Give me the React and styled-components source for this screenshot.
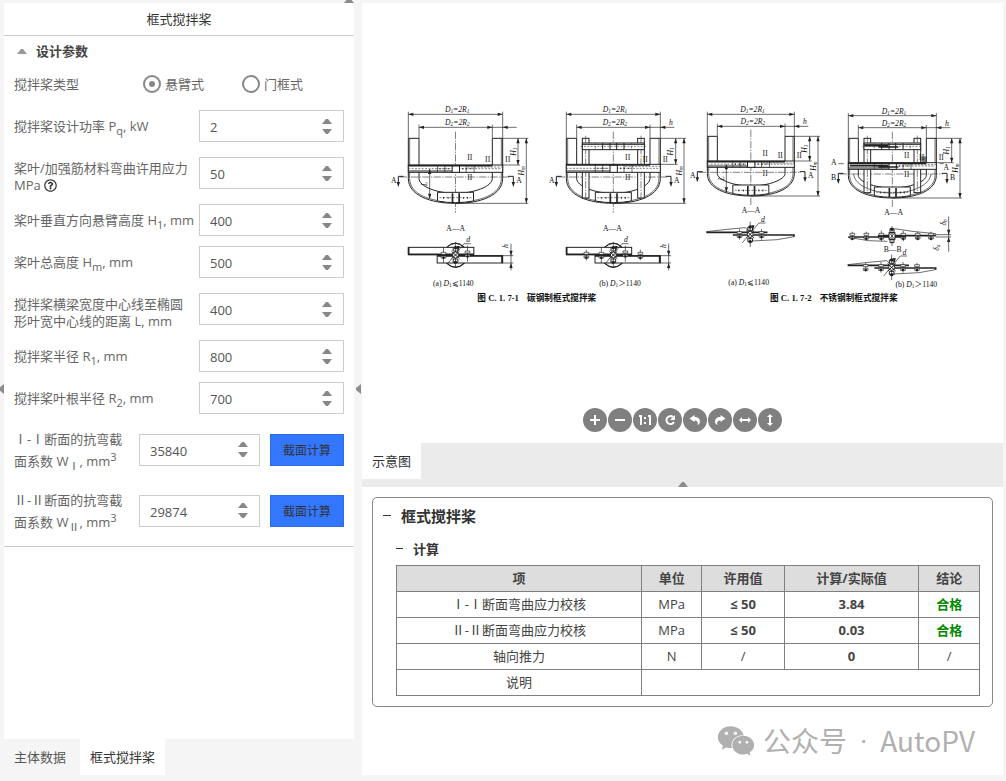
import React, { useState } from "react";
import styled, { createGlobalStyle } from "styled-components";
import { FaRegQuestionCircle, FaWeixin } from "react-icons/fa";

const GlobalStyle = createGlobalStyle`
  * {
    box-sizing: border-box;
  }
  body {
    margin: 0;
    background: #f5f5f5;
    color: #444;
    font-family: "Open Sans", "Noto Sans CJK SC", sans-serif;
    font-size: 13px;
  }
  button, input {
    font-family: inherit;
  }
`;

const Page = styled.div`
  display: grid;
  grid-template-columns: 4px 350px 8px minmax(0, 1fr);
  grid-template-rows: 3px 1fr;
  min-height: 100vh;
  padding: 0 3px 6px 0;
`;

const TopGutter = styled.div`
  grid-column: 1 / 3;
  display: flex;
  justify-content: flex-end;
  align-items: flex-end;
  overflow: hidden;
`;

const Gutter = styled.div`
  grid-row: 2;
  grid-column: ${(props) => props.$column};
  display: flex;
  align-items: center;
  justify-content: flex-end;
  padding-right: ${(props) => props.$inset || 0}px;
  overflow: hidden;
`;

const Handle = styled.button`
  flex: none;
  padding: 0;
  border: 0;
  background: none;
  color: #8c8c8c;
  cursor: pointer;

  svg {
    display: block;
    fill: currentColor;
  }
`;

const Column = styled.div`
  grid-row: 2;
  grid-column: ${(props) => props.$column};
  display: flex;
  flex-direction: column;
  min-width: 0;
`;

const Panel = styled.section`
  flex: 1;
  background: #fff;
`;

const PanelTitle = styled.h1`
  margin: 0;
  border-bottom: 1px solid #ccc;
  color: #333;
  font-size: 13px;
  font-weight: 400;
  line-height: 32px;
  text-align: center;
`;

const Group = styled.div`
  padding: 2px 10px 5px;
  border-bottom: 1px solid #ccc;
`;

const GroupHeader = styled.button`
  display: flex;
  align-items: center;
  gap: 9px;
  height: 25px;
  padding: 0 3px;
  border: 0;
  background: none;
  color: #444;
  font-size: 13px;
  font-weight: 700;

  svg {
    fill: #999;
  }
`;

const Row = styled.div`
  display: flex;
  align-items: center;
  min-height: ${(props) => (props.$tall ? 61 : 42)}px;
`;

const labelPadding = (props) => {
  if (props.$tall) return "8px 0";
  return props.$wrapped ? "13px 0 5px" : "9px 0";
};

const Label = styled.label`
  flex: ${(props) => (props.$width ? `0 0 ${props.$width}px` : "1")};
  padding: ${labelPadding};
  color: #666;
  line-height: ${(props) => (props.$tall ? 22 : 17)}px;

  sub, sup {
    font-size: 11px;
    line-height: 0;
  }
  svg {
    color: #333;
    vertical-align: -2px;
  }
`;

const RadioSet = styled.div`
  display: flex;
  flex: 1;
`;

const RadioLabel = styled.label`
  display: flex;
  align-items: center;
  gap: 4px;
  width: 99px;
  color: #666;
  line-height: 17px;
`;

const Radio = styled.input`
  appearance: none;
  display: grid;
  place-items: center;
  width: 18px;
  height: 18px;
  margin: 0;
  border: 2px solid #888;
  border-radius: 50%;

  &:checked::before {
    content: "";
    width: 6px;
    height: 6px;
    border-radius: 50%;
    background: #888;
  }
`;

const NumberBox = styled.div`
  display: flex;
  flex: none;
  width: ${(props) => props.$width}px;
  height: 32px;
  border: 1px solid #ccc;
  background: #fff;
`;

const NumberInput = styled.input`
  flex: 1;
  width: 0;
  min-width: 0;
  padding: 2px 0 0 10px;
  border: 0;
  outline: none;
  background: none;
  color: #555;
  font-size: 13px;
  appearance: textfield;

  &::-webkit-inner-spin-button {
    appearance: none;
    margin: 0;
  }
`;

const Spinner = styled.div`
  display: flex;
  flex-direction: column;
  justify-content: center;
  gap: 5px;
  width: 32px;
`;

const SpinButton = styled.button`
  display: flex;
  justify-content: center;
  padding: 0;
  border: 0;
  background: none;

  svg {
    fill: #888;
  }
`;

const CalcButton = styled.button`
  flex: 1;
  height: 32px;
  margin-left: 10px;
  padding: 0;
  border: 1px solid #2e6be6;
  background: #3377ff;
  color: #333;
  font-size: 12px;
  white-space: nowrap;
`;

const Tabs = styled.nav`
  display: flex;
  align-items: flex-start;
`;

const Tab = styled.button`
  height: 36px;
  padding: 0 ${(props) => (props.$wide ? 14 : 10)}px 2px 10px;
  border: 0;
  background: ${(props) => (props.$active ? "#fff" : "transparent")};
  color: ${(props) => (props.$active ? "#333" : "#555")};
  font-size: 13px;
`;

const Viewer = styled.section`
  display: flex;
  flex: 1;
  flex-direction: column;
  background: #fff;
`;

const Canvas = styled.div`
  display: flex;
  flex: 1;
  align-items: center;
  justify-content: center;
`;

const Drawing = styled.svg`
  width: 100%;
  max-width: 601px;
  fill: none;
  stroke: #222;
  stroke-width: 3;

  text {
    fill: #111;
    stroke: none;
    font-family: "Liberation Serif", "Noto Sans CJK SC", serif;
    font-size: 23px;
    text-anchor: middle;
  }
  .it {
    font-style: italic;
  }
  .sub {
    font-size: 16px;
  }
  .thin {
    stroke-width: 2;
  }
  .heavy {
    stroke-width: 5;
  }
  .solid {
    fill: #222;
    stroke: none;
  }
  .white {
    fill: #fff;
  }
  .axis {
    stroke: #444;
    stroke-width: 2;
    stroke-dasharray: 22 4 4 4;
  }
  .dash {
    stroke: #444;
    stroke-width: 2;
    stroke-dasharray: 6 4;
  }
  .caption {
    font-size: 26px;
    font-weight: 700;
    text-anchor: start;
  }
`;

const Toolbar = styled.div`
  display: flex;
  justify-content: center;
  gap: 1px;
  padding: 7px 0 11px;
`;

const ToolButton = styled.button`
  width: 24px;
  height: 24px;
  padding: 0;
  border: 0;
  border-radius: 50%;
  background: #808080;
  color: #fff;

  svg {
    display: block;
    fill: none;
    stroke: currentColor;
    stroke-width: 2;
  }
`;

const ViewerStrip = styled.div`
  background: #ebebeb;
`;

const StripHandle = styled.div`
  display: flex;
  align-items: flex-end;
  justify-content: center;
  height: 8px;
`;

const Report = styled.section`
  padding: 10px 10px 0;
  background: #fff;
`;

const Card = styled.div`
  padding: 5px 12px 10px 10px;
  border: 1px solid #888;
  border-radius: 5px;
`;

const Fold = styled.button`
  display: flex;
  align-items: center;
  gap: 10px;
  height: ${(props) => (props.$sub ? 34 : 24)}px;
  margin: ${(props) => (props.$sub ? "4px 0 0 13px" : "0")};
  padding: 0;
  border: 0;
  background: none;
  color: #333;
  font-size: ${(props) => (props.$sub ? 13 : 15)}px;
  font-weight: 700;

  &::before {
    content: "";
    width: ${(props) => (props.$sub ? 7 : 8)}px;
    border-top: 1px solid #333;
  }
`;

const Table = styled.table`
  width: calc(100% - 13px);
  margin-left: 13px;
  border-collapse: collapse;
  table-layout: fixed;
  text-align: center;

  th, td {
    height: 26px;
    padding: 0 0 2px;
    border: 1px solid #808080;
    line-height: 18px;
  }
  th {
    background: #ddd;
  }
`;

const Passed = styled.b`
  color: #008800;
`;

const Watermark = styled.footer`
  display: flex;
  align-items: center;
  justify-content: flex-end;
  gap: 8px;
  height: 68px;
  padding-right: 18px;
  color: #b0b0b0;
`;

const WatermarkText = styled.div`
  display: flex;
  gap: 12px;
  padding-bottom: 2px;
  font-family: "Noto Sans CJK SC", sans-serif;
  font-size: 28px;
  line-height: 40px;
`;

const Dot = styled.span`
  font-family: "Liberation Sans", sans-serif;
`;

const Triangle = ({ down }) => (
  <svg width="10" height="6" viewBox="0 0 10 6">
    <path d={down ? "M0 0H10L6 5H4Z" : "M0 6H10L6 1H4Z"} />
  </svg>
);

const ArrowUp = () => (
  <svg width="10" height="5" viewBox="0 0 10 5">
    <path d="M0 5L4 0H6L10 5Z" />
  </svg>
);

const ArrowLeft = () => (
  <svg width="5" height="10" viewBox="0 0 5 10">
    <path d="M5 0L0 4V6L5 10Z" />
  </svg>
);

const NumberField = ({ id, initial, width = 145 }) => {
  const [value, setValue] = useState(initial);

  return (
    <NumberBox $width={width}>
      <NumberInput
        id={id}
        type="number"
        value={value}
        onChange={(e) => setValue(e.target.value)}
      />
      <Spinner>
        <SpinButton
          aria-label="增加"
          onClick={() => setValue(Number(value) + 1)}
        >
          <Triangle />
        </SpinButton>
        <SpinButton
          aria-label="减少"
          onClick={() => setValue(Number(value) - 1)}
        >
          <Triangle down />
        </SpinButton>
      </Spinner>
    </NumberBox>
  );
};

const fields = [
  { id: "power", value: 2, label: <>搅拌桨设计功率 P<sub>q</sub>, kW</> },
  {
    id: "stress",
    value: 50,
    wrapped: true,
    label: (
      <>
        桨叶/加强筋材料弯曲许用应力 MPa <FaRegQuestionCircle size={13} />
      </>
    ),
  },
  { id: "h1", value: 400, label: <>桨叶垂直方向悬臂高度 H<sub>1</sub>, mm</> },
  { id: "hm", value: 500, label: <>桨叶总高度 H<sub>m</sub>, mm</> },
  {
    id: "length",
    value: 400,
    wrapped: true,
    label: <>搅拌桨横梁宽度中心线至椭圆<br />形叶宽中心线的距离 L, mm</>,
  },
  { id: "r1", value: 800, label: <>搅拌桨半径 R<sub>1</sub>, mm</> },
  { id: "r2", value: 700, label: <>搅拌桨叶根半径 R<sub>2</sub>, mm</> },
];

const sections = [
  {
    id: "w1",
    value: 35840,
    label: <>Ⅰ-Ⅰ断面的抗弯截<br />面系数 W<sub>Ⅰ</sub>, mm<sup>3</sup></>,
  },
  {
    id: "w2",
    value: 29874,
    label: <>Ⅱ-Ⅱ断面的抗弯截<br />面系数 W<sub>Ⅱ</sub>, mm<sup>3</sup></>,
  },
];

// Arrow head with its tip at x, y
const Head = ({ x, y, dir }) => {
  const turn = { right: 0, down: 90, left: 180, up: 270 }[dir];
  return (
    <path
      className="solid"
      d="M0 0L-15 -5V5Z"
      transform={`translate(${x} ${y}) rotate(${turn})`}
    />
  );
};

const DimX = ({ x1, x2, y, name }) => (
  <g>
    <path className="thin" d={`M${x1} ${y}H${x2}`} />
    <Head x={x1} y={y} dir="left" />
    <Head x={x2} y={y} dir="right" />
    {name && (
      <text className="it" x={(x1 + x2) / 2 + 5} y={y - 6}>
        D<tspan className="sub" dy="3">{name}</tspan>
        <tspan dy="-3">=2R</tspan>
        <tspan className="sub" dy="3">{name}</tspan>
      </text>
    )}
  </g>
);

const DimY = ({ x, y1, y2, name, sub }) => (
  <g>
    <path className="thin" d={`M${x} ${y1}V${y2}`} />
    <Head x={x} y={y1} dir="up" />
    <Head x={x} y={y2} dir="down" />
    <text
      className="it"
      transform={`translate(${x - 7} ${(y1 + y2) / 2}) rotate(-90)`}
    >
      {name}
      <tspan className="sub" dy="3">{sub}</tspan>
    </text>
  </g>
);

const Mark = ({ x, y, name, right }) => (
  <g>
    <path d={`M${x + (right ? -16 : 16)} ${y}H${x}V${y + 22}`} />
    <Head x={x} y={y + 32} dir="down" />
    <text x={x + (right ? 17 : -14)} y={y + 20}>{name}</text>
  </g>
);

const Paddle = ({ l, r, il, ir, top, cut, bot, d1, d2, beam, beamH, letter = "A", h, stiff }) => {
  const c = (l + r) / 2;
  const low = bot - 30;
  return (
    <g>
      <path className="thin" d={`M${l} ${d1 - 8}V${top}M${r} ${d1 - 8}V${top}M${il} ${d2 - 8}V${top}M${ir} ${d2 - 8}V${top}`} />
      <DimX x1={l} x2={r} y={d1} name="1" />
      <DimX x1={il} x2={ir} y={d2} name="2" />
      <path className="thin" d={`M${ir} ${d2}H${r + 42}`} />
      <Head x={r} y={d2} dir="left" />
      {h && <text className="it" x={r + 32} y={d2 - 6}>h</text>}

      <path className="white" d={`M${l} ${top}V${cut + 4}C${l} ${bot - 24} ${c - 76} ${bot} ${c} ${bot}S${r} ${bot - 24} ${r} ${cut + 4}V${top}H${ir}V${cut + 4}C${ir} ${low - 20} ${c + 54} ${low} ${c} ${low}S${il} ${low - 20} ${il} ${cut + 4}V${top}Z`} />
      <path className="thin" d={`M${l + 4} ${top}V${cut + 4}C${l + 4} ${bot - 26} ${c - 74} ${bot - 4} ${c} ${bot - 4}M${r - 4} ${top}V${cut + 4}C${r - 4} ${bot - 26} ${c + 74} ${bot - 4} ${c} ${bot - 4}`} />
      <path className="axis" d={`M${l - 26} ${cut}H${r + 20}M${c} ${top - 20}V${bot + 28}`} />

      {stiff && (
        <g>
          {[il + 17, ir - 37].map((x) => (
            <g key={x}>
              <rect className="white" x={x} y={top} width="20" height={bot - top - 16} />
              <path className="axis" d={`M${x + 10} ${top - 8}V${bot - 12}`} />
            </g>
          ))}
          <rect className="white" x={il + 17} y={top + 14} width={ir - il - 34} height="20" />
          <path className="dash" d={`M${il + 12} ${top + 24}H${ir - 12}`} />
          <path d={`M${il + 17} ${top + 18}H${ir - 17}M${c - 10} ${top + 14}v20M${c + 10} ${top + 14}v20M${c - 32} ${top + 14}v20M${c + 32} ${top + 14}v20`} />
          <path className="dash" d={`M${c - 54} ${top + 14}v20M${c + 54} ${top + 14}v20`} />
        </g>
      )}

      <rect className="white" x={l} y={beam} width={r - l} height={beamH} />
      <path className="heavy" d={`M${l} ${beam + 2}H${ir}`} />
      <path d={`M${l} ${beam + beamH - 4}H${c - 10}`} />
      <path className="dash" d={`M${l} ${beam + beamH / 2}H${r - 4}M${c + 36} ${beam + 6}H${r}`} />
      <rect className="white" x={c - 10} y={beam + 3} width="22" height={beamH - 3} />
      <path className="thin" d={`M${c - 54} ${beam}v${beamH}M${c + 56} ${beam}v${beamH}M${c - 32} ${beam}v${beamH}M${c + 32} ${beam}v${beamH}`} />
      {[-46, -34, -22, 22, 34, 46].map((x) => (
        <path key={x} d={`M${c + x} ${beam + beamH / 2 - 2}v4`} />
      ))}

      <path className="white" d={`M${c - 54} ${low - 3}H${c + 54}V${bot - 7}Q${c} ${bot + 3} ${c - 54} ${bot - 7}Z`} />
      <path className="heavy" d={`M${c - 9} ${low}V${bot - 3}M${c + 11} ${low}V${bot - 3}`} />
      <path className="dash" d={`M${c - 48} ${bot - 17}H${c + 50}`} />
      {[-36, -22, 24, 36].map((x) => (
        <path key={x} d={`M${c + x} ${bot - 19}v5`} />
      ))}

      <text x={c + 43} y={beam - 14}>II</text>
      <text x={c + 43} y={cut + 10}>II</text>
      <text x={ir - 14} y={beam - 8}>II</text>
      <text x={r + 15} y={beam - 8}>II</text>

      <path className="thin" d={`M${r} ${top}H${r + 77}M${r} ${beam}H${r + 52}M${c} ${bot}H${r + 77}`} />
      <DimY x={r + 46} y1={top} y2={beam} name="H" sub="1" />
      <DimY x={r + 71} y1={top} y2={bot} name="H" sub="m" />
      <Mark x={l - 30} y={cut - 2} name={letter} />
      <Mark x={r + 32} y={cut - 2} name={letter} right />
    </g>
  );
};

const Bolt = ({ x, y, tall = 16 }) => (
  <g>
    <path className="thin" d={`M${x} ${y - tall}V${y + tall}`} />
    <path className="white thin" d={`M${x - 7} ${y - 8}h14v6h-14ZM${x - 7} ${y + 3}h14v6h-14Z`} />
    <circle className="solid" cx={x} cy={y + 8} r="4" />
  </g>
);

const Hub = ({ x, y }) => (
  <g>
    <path className="thin" d={`M${x} ${y - 38}V${y + 38}M${x - 24} ${y + 26}L${x + 26} ${y - 34}H${x + 46}`} />
    <circle className="white" cx={x} cy={y} r="9" />
    <path d={`M${x - 12} ${y - 11}L${x + 12} ${y + 11}M${x + 12} ${y - 11}L${x - 12} ${y + 11}M${x - 7} ${y - 22}h14v10h-14ZM${x - 7} ${y + 12}h14v10h-14Z`} />
    <Head x={x + 8} y={y - 12} dir="down" />
    <circle className="solid" cx={x} cy={y - 22} r="5" />
    <circle className="solid" cx={x} cy={y + 22} r="5" />
    <text className="it" x={x + 38} y={y - 38}>d</text>
  </g>
);

const PlateSection = ({ l, r, extra }) => {
  const c = (l + r) / 2;
  return (
    <g>
      <path className="white" d={`M${c - 27} 457Q${c} 431 ${c + 27} 457V505Q${c} 530 ${c - 27} 505Z`} />
      <rect className="white" x={l} y="457" width={c + 55 - l} height="22" />
      <rect className="white" x={c - 55} y="482" width={r - c + 55} height="22" />
      <path d={`M${c - 26} 457Q${c} 433 ${c + 26} 457M${c - 26} 504Q${c} 529 ${c + 26} 504`} />
      <path className="heavy" d={`M${l} 478H${c + 55}M${c - 55} 483H${r}M${r - 2} 482V504M${l + 1} 457V478`} />
      <Bolt x={c - 36} y={480} tall={24} />
      <Bolt x={c + 36} y={476} tall={24} />
      {extra && <Bolt x={l + 60} y={480} />}
      {extra && <Bolt x={r - 60} y={480} />}
      <Hub x={c} y={480} />
      <path className="thin" d={`M${r} 482H${r + 32}M${r} 504H${r + 32}M${r + 25} 446V526`} />
      <Head x={r + 25} y={482} dir="down" />
      <Head x={r + 25} y={504} dir="up" />
      <text className="it" transform={`translate(${r + 17} 453) rotate(-90)`}>h</text>
    </g>
  );
};

const TaperSection = ({ l, r, y, flip, bolts = [] }) => {
  const c = (l + r) / 2;
  return (
    <g>
      {flip ? (
        <path className="thin" d={`M${l} ${y + 4}L${l + 60} ${y + 14}L${c - 14} ${y + 16}M${c + 8} ${y - 22}L${c + 60} ${y - 14}L${r} ${y - 7}V${y}`} />
      ) : (
        <path className="thin" d={`M${l} ${y - 8}L${c - 60} ${y - 16}L${c - 14} ${y - 20}L${c - 6} ${y - 10}M${c + 6} ${y + 20}L${r - 50} ${y + 16}L${r} ${y + 7}`} />
      )}
      <path className="heavy" d={flip
        ? `M${l} ${y + 3}H${c + 42}M${c - 42} ${y - 1}H${r}`
        : `M${l} ${y - 6}H${c + 52}M${c - 52} ${y + 2}H${r}V${y + 7}`} />
      {bolts.map((x) => (
        <Bolt key={x} x={x} y={y} tall={13} />
      ))}
      <Bolt x={c - 32} y={y} />
      <Bolt x={c + 34} y={y} />
      {!flip && <Hub x={c} y={y} />}
      {flip && (
        <g>
          <path className="white" d={`M${c - 9} ${y - 10}h18v20h-18ZM${c - 6} ${y - 22}h12v12h-12ZM${c - 6} ${y + 10}h12v10h-12Z`} />
          <path className="thin" d={`M${c} ${y - 30}V${y + 30}M${c - 9} ${y - 10}l18 20M${c + 9} ${y - 10}l-18 20`} />
          <circle className="solid" cx={c} cy={y - 20} r="5" />
        </g>
      )}
    </g>
  );
};

const PaddleDrawing = () => (
  <Drawing viewBox="0 0 1803 645" role="img" aria-label="框式搅拌桨示意图">
    <g transform="translate(9 0)">
      <Paddle l={70} r={353} il={102} ir={322} top={130} cut={246} bot={325} d1={58} d2={97} beam={210} beamH={22} />
      <DimY x={134} y1={222} y2={311} name="L" />
      <text x="212" y="409">A—A</text>
      <PlateSection l={70} r={353} />
      <text x="205" y="574">(a) <tspan className="it">D</tspan><tspan className="sub" dy="3">1</tspan><tspan dy="-3">⩽1140</tspan></text>
    </g>
    <g transform="translate(474 0)">
      <Paddle l={79} r={361} il={110} ir={330} top={130} cut={246} bot={325} d1={58} d2={97} beam={208} beamH={24} h stiff />
      <text x="217" y="408">A—A</text>
      <PlateSection l={79} r={361} extra />
      <text x="240" y="574">(b) <tspan className="it">D</tspan><tspan className="sub" dy="3">1</tspan><tspan dy="-3">＞1140</tspan></text>
    </g>
    <g transform="translate(909 0)">
      <Paddle l={67} r={328} il={97} ir={300} top={124} cut={232} bot={303} d1={58} d2={94} beam={198} beamH={19} h />
      <DimY x={124} y1={208} y2={292} name="L" />
      <text x="198" y="355">A—A</text>
      <TaperSection l={64} r={327} y={418} />
      <text x="191" y="570">(a) <tspan className="it">D</tspan><tspan className="sub" dy="3">1</tspan><tspan dy="-3">⩽1140</tspan></text>
    </g>
    <g transform="translate(1329 0)">
      <Paddle l={70} r={334} il={100} ir={304} top={130} cut={237} bot={309} d1={62} d2={98} beam={203} beamH={20} letter="B" h stiff />
      <path className="heavy" d="M75 212H190M118 152H190M160 216h60M160 156h60" />
      <path className="thin" d="M86 237C88 270 140 294 202 294S314 270 318 237M40 206h16M344 206h12" />
      <rect className="solid" x="289" y="184" width="15" height="20" opacity="0.6" />
      <text x="26" y="210">A</text>
      <text x="364" y="226">A</text>
      <text x="206" y="359">A—A</text>
      <TaperSection l={70} r={332} y={423} flip bolts={[82, 124, 278, 318]} />
      <path className="thin" d="M332 419H378M332 426H378M371 364V470" />
      <Head x={371} y={419} dir="down" />
      <Head x={371} y={426} dir="up" />
      <text className="it" transform="translate(362 382) rotate(-90)">δ<tspan className="sub" dy="3">b</tspan></text>
      <text className="it" transform="translate(341 458) rotate(-90)">δ<tspan className="sub" dy="3">a</tspan></text>
      <text x="203" y="470">B—B</text>
      <TaperSection l={68} r={332} y={517} bolts={[122, 276]} />
      <text x="274" y="577">(b) <tspan className="it">D</tspan><tspan className="sub" dy="3">1</tspan><tspan dy="-3">＞1140</tspan></text>
    </g>
    <text className="caption" x="286" y="619">图 C. 1. 7-1</text>
    <text className="caption" x="435" y="619">碳钢制框式搅拌桨</text>
    <text className="caption" x="1164" y="619">图 C. 1. 7-2</text>
    <text className="caption" x="1313" y="619">不锈钢制框式搅拌桨</text>
  </Drawing>
);

const tools = [
  { name: "放大", icon: <path d="M7 12H17M12 7V17" /> },
  { name: "缩小", icon: <path d="M7 12H17" /> },
  {
    name: "原始大小",
    icon: <path d="M6 8H8V17M15 8H17V17M12 9V11M12 14V16" />,
  },
  {
    name: "重置",
    icon: (
      <>
        <path d="M15 9A4 4 0 1 0 16 14" />
        <path d="M17 7V12H12Z" fill="currentColor" stroke="none" />
      </>
    ),
  },
  {
    name: "向左旋转",
    icon: (
      <path
        d="M6.500 10.500L11.500 7V9C15 9 17 11 17 13.500C17 15.500 16 16.500 14.500 17C15.500 14 14 12.500 11.500 12.500V14Z"
        fill="currentColor"
        stroke="none"
      />
    ),
  },
  {
    name: "向右旋转",
    icon: (
      <path
        d="M17.500 10.500L12.500 7V9C9 9 7 11 7 13.500C7 15.500 8 16.500 9.500 17C8.500 14 10 12.500 12.500 12.500V14Z"
        fill="currentColor"
        stroke="none"
      />
    ),
  },
  {
    name: "水平翻转",
    icon: (
      <>
        <path d="M9 12H15" />
        <path d="M6 12L9 9V15ZM18 12L15 9V15Z" fill="currentColor" stroke="none" />
      </>
    ),
  },
  {
    name: "垂直翻转",
    icon: (
      <>
        <path d="M12 9V15" />
        <path d="M12 6L9 9H15ZM12 18L9 15H15Z" fill="currentColor" stroke="none" />
      </>
    ),
  },
];

const App = () => {
  const [type, setType] = useState("悬臂式");

  return (
    <Page>
      <GlobalStyle />
      <TopGutter>
        <Handle aria-label="折叠顶部"><ArrowUp /></Handle>
      </TopGutter>
      <Gutter $column={1}>
        <Handle aria-label="折叠左侧"><ArrowLeft /></Handle>
      </Gutter>

      <Column $column={2}>
        <Panel>
          <PanelTitle>框式搅拌桨</PanelTitle>
          <Group>
            <GroupHeader><Triangle />设计参数</GroupHeader>
            <Row>
              <Label as="span" $width={129}>搅拌桨类型</Label>
              <RadioSet>
                {["悬臂式", "门框式"].map((item) => (
                  <RadioLabel key={item}>
                    <Radio
                      type="radio"
                      name="type"
                      checked={type === item}
                      onChange={() => setType(item)}
                    />
                    {item}
                  </RadioLabel>
                ))}
              </RadioSet>
            </Row>
            {fields.map((field) => (
              <Row key={field.id}>
                <Label htmlFor={field.id} $wrapped={field.wrapped}>
                  {field.label}
                </Label>
                <NumberField id={field.id} initial={field.value} />
              </Row>
            ))}
            {sections.map((field) => (
              <Row key={field.id} $tall>
                <Label htmlFor={field.id} $width={125} $tall>{field.label}</Label>
                <NumberField id={field.id} initial={field.value} width={121} />
                <CalcButton>截面计算</CalcButton>
              </Row>
            ))}
          </Group>
        </Panel>
        <Tabs>
          <Tab $wide>主体数据</Tab>
          <Tab $active>框式搅拌桨</Tab>
        </Tabs>
      </Column>

      <Gutter $column={3} $inset={1}>
        <Handle aria-label="折叠参数"><ArrowLeft /></Handle>
      </Gutter>

      <Column $column={4}>
        <Viewer>
          <Canvas>
            <PaddleDrawing />
          </Canvas>
          <Toolbar>
            {tools.map((tool) => (
              <ToolButton key={tool.name} aria-label={tool.name}>
                <svg width="24" height="24" viewBox="0 0 24 24">{tool.icon}</svg>
              </ToolButton>
            ))}
          </Toolbar>
        </Viewer>
        <ViewerStrip>
          <Tabs>
            <Tab $active>示意图</Tab>
          </Tabs>
          <StripHandle>
            <Handle aria-label="折叠示意图"><ArrowUp /></Handle>
          </StripHandle>
        </ViewerStrip>
        <Report>
          <Card>
            <Fold>框式搅拌桨</Fold>
            <Fold $sub>计算</Fold>
            <Table>
              <colgroup>
                <col style={{ width: "42%" }} />
                <col style={{ width: "10.4%" }} />
                <col style={{ width: "14.1%" }} />
                <col style={{ width: "23.1%" }} />
                <col />
              </colgroup>
              <thead>
                <tr>
                  <th>项</th>
                  <th>单位</th>
                  <th>许用值</th>
                  <th>计算/实际值</th>
                  <th>结论</th>
                </tr>
              </thead>
              <tbody>
                <tr>
                  <td>Ⅰ-Ⅰ断面弯曲应力校核</td>
                  <td>MPa</td>
                  <td><b>≤ 50</b></td>
                  <td><b>3.84</b></td>
                  <td><Passed>合格</Passed></td>
                </tr>
                <tr>
                  <td>Ⅱ-Ⅱ断面弯曲应力校核</td>
                  <td>MPa</td>
                  <td><b>≤ 50</b></td>
                  <td><b>0.03</b></td>
                  <td><Passed>合格</Passed></td>
                </tr>
                <tr>
                  <td>轴向推力</td>
                  <td>N</td>
                  <td>/</td>
                  <td><b>0</b></td>
                  <td>/</td>
                </tr>
                <tr>
                  <td>说明</td>
                  <td colSpan={4} />
                </tr>
              </tbody>
            </Table>
          </Card>
          <Watermark>
            <FaWeixin size={38} />
            <WatermarkText>
              <span>公众号</span>
              <Dot>·</Dot>
              <span>AutoPV</span>
            </WatermarkText>
          </Watermark>
        </Report>
      </Column>
    </Page>
  );
};

export default App;
